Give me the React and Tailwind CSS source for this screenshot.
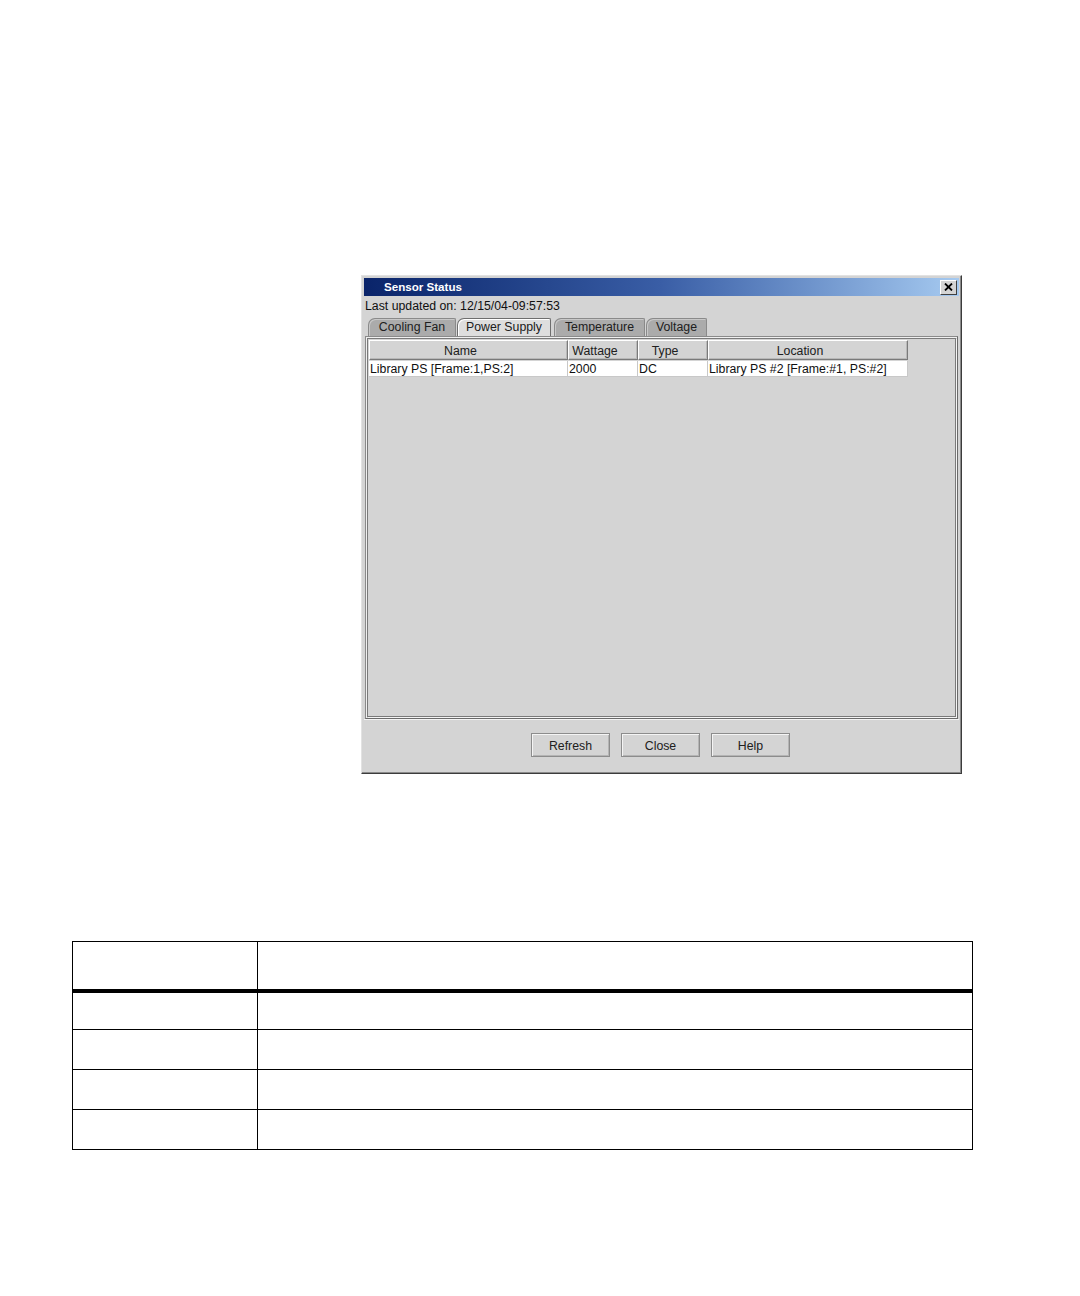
import React from "react";

function Tab({ label, width, selected }) {
  return (
    <div
      className={
        "h-[18px] flex items-center justify-center rounded-tl-[7px] rounded-tr-[2px] border border-b-0 text-[12.3px] leading-none " +
        (selected
          ? "bg-[#dedede] border-[#6e6e6e] shadow-[inset_1px_1px_0_#ffffff] text-[#202020]"
          : "bg-[#ababab] border-[#8a8a8a] shadow-[inset_1px_1px_0_#c8c8c8] text-[#202020]")
      }
      style={{ width }}
    >
      <span>{label}</span>
    </div>
  );
}

function HeaderCell({ label, width }) {
  return (
    <div
      className="h-[20px] flex items-center justify-center pr-[16px] pt-[2px] bg-[#d4d4d4] border border-t-white border-l-white border-r-[#7a7a7a] border-b-[#7a7a7a] shadow-[inset_-1px_-1px_0_#b8b8b8] text-[12.3px] text-[#202020]"
      style={{ width }}
    >
      {label}
    </div>
  );
}

function BodyCell({ label, width }) {
  return (
    <div
      className="h-[16px] flex items-center bg-white border-r border-b border-[#c8c8c8] pl-[1px] pt-[1px] text-[12.3px] text-[#101010] whitespace-nowrap overflow-hidden"
      style={{ width }}
    >
      {label}
    </div>
  );
}

function Btn({ label }) {
  return (
    <div className="w-[79px] h-[24px] flex items-center justify-center pt-[2px] bg-[#d4d4d4] border border-[#8c8c8c] shadow-[inset_1px_1px_0_#f4f4f4,inset_-1px_-1px_0_#b4b4b4] text-[12.3px] text-[#202020]">
      {label}
    </div>
  );
}

export default function App() {
  return (
    <div
      className="w-[1080px] h-[1296px] bg-white overflow-hidden pt-[275px]"
      style={{ fontFamily: '"Liberation Sans", Arial, sans-serif' }}
    >
      {/* Dialog */}
      <div className="ml-[361px] w-[601px] h-[499px] bg-[#d4d4d4] border border-t-[#e2e2e2] border-l-[#e2e2e2] border-r-[#3c3c3c] border-b-[#3c3c3c] shadow-[inset_-1px_-1px_0_#8a8a8a] p-[2px] flex flex-col">
        {/* Title bar */}
        <div className="h-[18px] w-[595px] flex items-center justify-between bg-gradient-to-r from-[#0a246a] via-[#3a5ea6] to-[#a6caf0] pl-[20px] pr-[2px]">
          <span className="text-white font-bold text-[11.6px] leading-none">Sensor Status</span>
          <div className="w-[17px] h-[15px] bg-[#d4d4d4] border border-t-white border-l-white border-r-[#404040] border-b-[#404040] flex items-center justify-center">
            <svg width="9" height="8" viewBox="0 0 9 8">
              <path d="M1 0.5 L8 7.5 M8 0.5 L1 7.5" stroke="#000" strokeWidth="1.8" />
            </svg>
          </div>
        </div>

        {/* Last updated */}
        <div className="h-[20px] flex items-center pl-[1px] text-[12.3px] text-[#101010]">
          Last updated on: 12/15/04-09:57:53
        </div>

        {/* Tabs */}
        <div className="mt-[2px] ml-[4px] flex items-end gap-[1px]">
          <Tab label="Cooling Fan" width={88} />
          <Tab label="Power Supply" width={94} selected />
          <div className="w-[1px]" />
          <Tab label="Temperature" width={91} />
          <Tab label="Voltage" width={61} />
        </div>

        {/* Tab panel */}
        <div className="ml-[1px] w-[593px] h-[383px] border border-t-[#8a8a8a] border-l-[#8a8a8a] border-r-[#6a6a6a] border-b-[#6a6a6a] shadow-[inset_1px_1px_0_#f0f0f0] p-[1px]">
          <div className="w-full h-full border border-[#7a7a7a] shadow-[1px_1px_0_#f4f4f4] p-[1px]">
            <div className="flex">
              <HeaderCell label="Name" width={199} />
              <HeaderCell label="Wattage" width={70} />
              <HeaderCell label="Type" width={70} />
              <HeaderCell label="Location" width={200} />
            </div>
            <div className="flex mt-[1px]">
              <BodyCell label="Library PS [Frame:1,PS:2]" width={199} />
              <BodyCell label="2000" width={70} />
              <BodyCell label="DC" width={70} />
              <BodyCell label="Library PS #2 [Frame:#1, PS:#2]" width={200} />
            </div>
          </div>
        </div>

        {/* Button bar */}
        <div className="flex-1 border-t border-[#f4f4f4] flex justify-center gap-[11px] pt-[13px] pr-[2px]">
          <Btn label="Refresh" />
          <Btn label="Close" />
          <Btn label="Help" />
        </div>
      </div>

      {/* Lower table */}
      <div className="ml-[72px] mt-[167px] w-[901px] border-t border-l border-r border-black">
        <div className="flex h-[51px] border-b-[4px] border-black">
          <div className="w-[185px] border-r border-black" />
          <div className="flex-1" />
        </div>
        <div className="flex h-[37px] border-b border-black">
          <div className="w-[185px] border-r border-black" />
          <div className="flex-1" />
        </div>
        <div className="flex h-[40px] border-b border-black">
          <div className="w-[185px] border-r border-black" />
          <div className="flex-1" />
        </div>
        <div className="flex h-[40px] border-b border-black">
          <div className="w-[185px] border-r border-black" />
          <div className="flex-1" />
        </div>
        <div className="flex h-[40px] border-b border-black">
          <div className="w-[185px] border-r border-black" />
          <div className="flex-1" />
        </div>
      </div>
    </div>
  );
}
